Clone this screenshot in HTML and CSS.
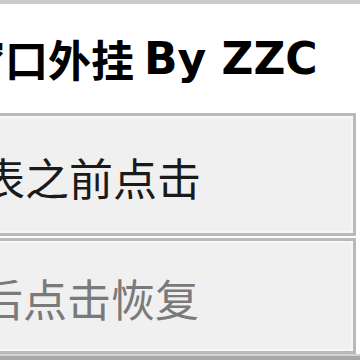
FILE: index.html
```html
<!DOCTYPE html>
<html>
<head>
    <title>窗口外挂 By ZZC</title>
    <link rel="stylesheet" href="styles.css">
</head>
<body>
    <div id="window">
        <div class="title">窗口外挂 <span class="latin">By ZZC</span></div>
        <button class="actionButton first">表之前点击</button>
        <button class="actionButton" disabled>后点击恢复</button>
        <div class="bottomEdge"></div>
    </div>
</body>
</html>
```

FILE: styles.css
```css
body {
    margin: 0;
    width: 360px;
    height: 360px;
    overflow: hidden;
    background-color: #fff;
    font-family: "Noto Sans CJK SC", sans-serif;
}

#window {
    display: flex;
    flex-direction: column;
    height: 360px;
    border-top: 4px solid #cacaca;
    box-sizing: border-box;
}

.title {
    height: 109px;
    display: flex;
    align-items: center;
    margin-left: -38px;
    font-size: 43px;
    font-weight: bold;
    line-height: 1;
    color: #000;
    white-space: nowrap;
}

.latin {
    font-family: "DejaVu Sans", sans-serif;
    font-size: 44px;
    margin-left: 10px;
}

.actionButton {
    display: flex;
    align-items: center;
    margin: 0 4px 0 -40px;
    padding: 4px 0 0 18px;
    height: 116px;
    background-color: #f0f0f0;
    border: 3px solid #bababa;
    box-shadow: inset 0 0 0 2px #f6f6f6;
    font-family: "Noto Sans CJK SC", sans-serif;
    font-size: 44px;
    line-height: 1;
    color: #1a1a1a;
    white-space: nowrap;
}

.first {
    height: 123px;
    margin-bottom: 2px;
}

.actionButton:disabled {
    color: #7a7a7a;
    padding-left: 16px;
}

.bottomEdge {
    flex: 1;
    background-color: #a8a8a8;
    border-top: 2px solid #d4d4d4;
}
```
